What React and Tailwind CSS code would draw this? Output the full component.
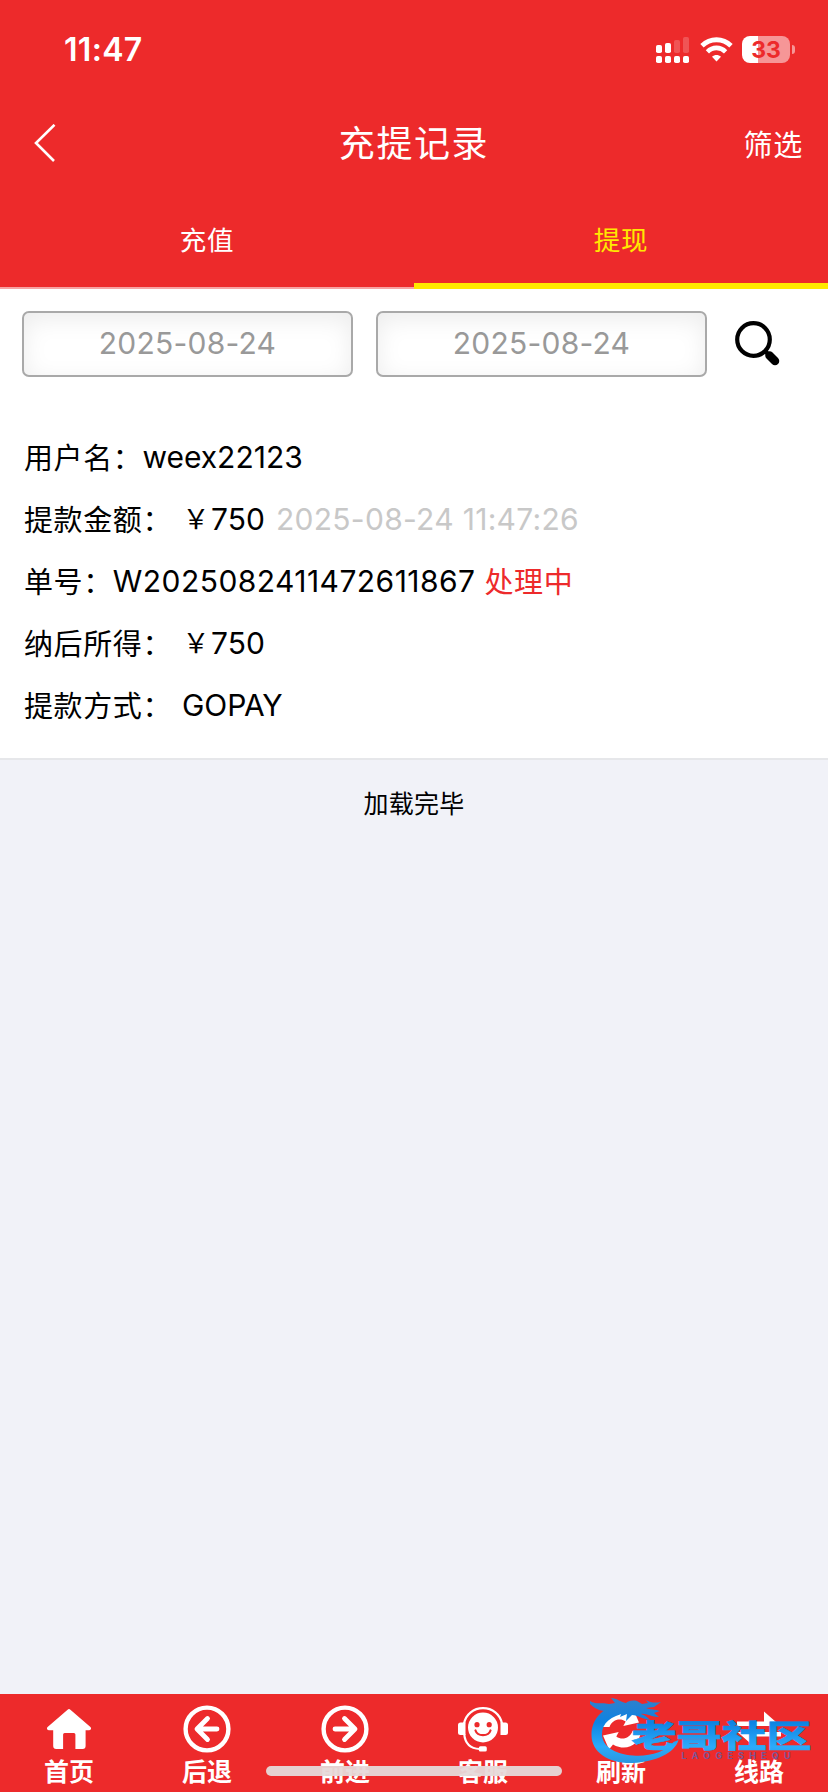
import clsx from 'clsx';

const tabs = [
    { label: '充值', active: false },
    { label: '提现', active: true },
];

function HomeIcon() {
    return (
        <svg width="44" height="40" viewBox="0 0 44 40" fill="#fff">
            <path d="M20.6 .8a2 2 0 0 1 2.8 0L43.4 18c1.2 1.2.6 3.2-1.2 3.2H38.6V37a3 3 0 0 1-3 3H28.4V25.6a1.5 1.5 0 0 0-1.5-1.5H17.6a1.5 1.5 0 0 0-1.5 1.5V40H9.2a3 3 0 0 1-3-3V21.2H1.8C0 21.2-.6 19.2.6 18Z" />
        </svg>
    );
}

function ArrowIcon({ flip }) {
    return (
        <svg width="48" height="48" viewBox="0 0 48 48" fill="none" stroke="#fff" strokeLinecap="round" strokeLinejoin="round" className={clsx(flip && '-scale-x-100')}>
            <circle cx="24" cy="24" r="21.4" strokeWidth="4.4" />
            <path d="M24.5 13.5 14 24l10.500 10.500M14.500 24H34" strokeWidth="4.8" />
        </svg>
    );
}

function ServiceIcon() {
    return (
        <svg width="50" height="45" viewBox="0 0 50 45" fill="none">
            <circle cx="25" cy="20.5" r="15" fill="#fff" />
            <path d="M6 16.5C8 7 15.5 1.2 25 1.2S42 7 44 16.5" stroke="#fff" strokeWidth="2.2" />
            <path d="M7.5 15.5V28h-5A2.5 2.5 0 0 1 0 25.5V18a2.5 2.5 0 0 1 2.5-2.5ZM42.5 15.5V28h5a2.5 2.5 0 0 0 2.5-2.5V18a2.5 2.5 0 0 0-2.5-2.5Z" fill="#fff" />
            <path d="M6.2 27c.8 9 6 14.6 15.5 15" stroke="#fff" strokeWidth="2.2" />
            <rect x="20.8" y="39.3" width="8" height="5.2" rx="1.6" fill="#fff" />
            <circle cx="19" cy="17.7" r="2.6" fill="#ed2a2b" />
            <circle cx="31.2" cy="17.7" r="2.6" fill="#ed2a2b" />
            <path d="M17.5 23.5c2 6.200 13 6.200 15 0" stroke="#ed2a2b" strokeWidth="2.2" strokeLinecap="round" />
        </svg>
    );
}

function RefreshIcon() {
    return (
        <svg width="44" height="44" viewBox="0 0 44 44" fill="#fff">
            <path d="M4 28.5 19.700 25l-2.400 4.500c5.500 4 13.700 2 16.200-5.500H42C41 37 28 45.500 14 37.500L10 42.500Z" />
            <path d="M4 28.5 19.700 25l-2.400 4.500c5.500 4 13.700 2 16.200-5.500H42C41 37 28 45.500 14 37.500L10 42.500Z" transform="rotate(180 22 22)" />
        </svg>
    );
}

function RouteIcon() {
    return (
        <svg width="44" height="40" viewBox="0 0 44 40" fill="#fff">
            <path d="M0 12.5h27v-10L43.5 17H0ZM44 27.5H17v10L.5 23H44Z" />
        </svg>
    );
}

const navItems = [
    { label: '首页', icon: <HomeIcon /> },
    { label: '后退', icon: <ArrowIcon /> },
    { label: '前进', icon: <ArrowIcon flip /> },
    { label: '客服', icon: <ServiceIcon /> },
    { label: '刷新', icon: <RefreshIcon /> },
    { label: '线路', icon: <RouteIcon /> },
];

function StatusBar() {
    return (
        <div className="h-[98px] flex items-start justify-between pl-[64px] pr-[33px] pt-[33px]">
            <span className="text-[32px] leading-[34px] font-semibold tracking-[0.3px]">11:47</span>
            <div className="flex items-center pt-[3px]">
                <svg width="33" height="27" viewBox="0 0 33 27" fill="#fff">
                    <rect x="0" y="9" width="6" height="8" rx="1.8" />
                    <rect x="9" y="7" width="6" height="10" rx="1.8" />
                    <rect x="18" y="4" width="6" height="13" rx="1.8" opacity=".2" />
                    <rect x="27" y="1" width="6" height="16" rx="1.8" opacity=".2" />
                    <rect x="0" y="20" width="6" height="7" rx="1.8" />
                    <rect x="9" y="20" width="6" height="7" rx="1.8" />
                    <rect x="18" y="20" width="6" height="7" rx="1.8" />
                    <rect x="27" y="20" width="6" height="7" rx="1.8" />
                </svg>
                <svg className="ml-[11px]" width="33" height="25" viewBox="0 0 33 25" fill="none" stroke="#fff">
                    <path d="M2 8.8C10.2.7 22.8.7 31 8.8" strokeWidth="4.8" />
                    <path d="M7.4 14.8c5.2-5.2 13-5.2 18.2 0" strokeWidth="4.6" />
                    <path d="M16.5 24.5 12 19.8c2.6-2.3 6.4-2.3 9 0Z" fill="#fff" stroke="none" />
                </svg>
                <div className="ml-[9px] w-[48px] h-[27px] rounded-[8px] bg-[linear-gradient(to_right,#fff_33.3%,#f69697_33.3%)] flex items-center justify-center pt-px text-[#ed2a2b] text-[23px] font-bold leading-none">
                    33
                </div>
                <span className="ml-[2px] w-[3px] h-[9px] rounded-r-full bg-[#f69697]" />
            </div>
        </div>
    );
}

function DateField({ value }) {
    return (
        <div className="w-[331px] h-[66px] rounded-[7px] border-2 border-[#a9a9a9] bg-white shadow-[inset_0_6px_24px_rgba(0,0,0,0.08)] flex items-center justify-center pb-px text-[30px] tracking-[0.25px] text-[#999]">
            {value}
        </div>
    );
}

function Row({ label, children }) {
    return (
        <div className="h-[62px] flex items-center whitespace-pre">
            <span className="tracking-[0.6px] pt-px">{label}</span>
            {children}
        </div>
    );
}

function Amount({ value }) {
    return (
        <>
            <span className="ml-[9px] w-[30px] text-center text-[27px]">￥</span>
            <span className="text-[30px] pb-[2px]">{value}</span>
        </>
    );
}

function Watermark() {
    return (
        <svg className="absolute left-[588px] top-[1692px]" width="226" height="76" viewBox="0 0 226 76">
            <defs>
                <linearGradient id="wm" x1="0" y1="0" x2="0" y2="76" gradientUnits="userSpaceOnUse">
                    <stop offset="0" stopColor="#3a7fc4" />
                    <stop offset=".4" stopColor="#0d83e3" />
                    <stop offset=".72" stopColor="#2cabfa" />
                    <stop offset="1" stopColor="#2b8fd8" />
                </linearGradient>
            </defs>
            <path d="M34 12C16 14 3.5 26 3.5 43 3.5 61 22 72 45 71c22-1 42-10 45.5-23l-5 2C78 60 60 65 45 63.5 26 62 14 54 14 42c0-11 9-18 24-21Z" fill="url(#wm)" />
            <path d="M2 9c7 4 12 1 19 3l6-1-4-5c6 0 9 4 15 5 2-2 6-3 11-2l5 3 6-1-2-3c5 3 9 3 15 2l-7 5-8 1c4 2 9 1 14 3l-6 2 5 4c-8 0-13-4-18-3 4 1 6 3 9 6-8-1-12-5-18-5l-6 6 1-7-7 3 2-5c-6 1-10 3-15 7l3-8c-7 0-13 0-20-7Z" fill="url(#wm)" />
            <text x="43.500" y="54.5" fontSize="31" fontWeight="900" textLength="180" lengthAdjust="spacingAndGlyphs" fill="url(#wm)" stroke="url(#wm)" strokeWidth=".6" className="font-['Noto_Sans_CJK_SC',sans-serif]">老哥社区</text>
            <text x="93.5" y="67" fontSize="9" fontWeight="700" textLength="109" fill="#7c5596" className="font-['Inter',sans-serif]">LAOGESHEQU</text>
        </svg>
    );
}

export default function App() {
    return (
        <div className="relative w-[828px] h-[1792px] overflow-hidden flex flex-col bg-[#f1f2f8] text-black font-['Inter','Noto_Sans_CJK_SC',sans-serif]">
            <header className="h-[289px] shrink-0 flex flex-col bg-[#ed2a2b] text-white">
                <StatusBar />
                <div className="h-[92px] flex items-center pl-[34px] pr-[25px]">
                    <div className="flex-1 pb-[3px]">
                        <svg width="22" height="38" viewBox="0 0 22 38" fill="none" stroke="#fff" strokeWidth="2.6">
                            <path d="M20.5 .8 2 19l18 18" />
                        </svg>
                    </div>
                    <h1 className="text-[36px] tracking-[1.6px] -ml-[9px]">充提记录</h1>
                    <span className="flex-1 text-right text-[29px] tracking-[0.8px] pt-[4px]">筛选</span>
                </div>
                <nav className="flex-1 flex">
                    {tabs.map(tab => (
                        <div
                            key={tab.label}
                            className={clsx(
                                'flex-1 flex justify-center text-[26.5px] leading-[40px] tracking-[0.8px] pt-[30px]',
                                tab.active ? 'text-[#ffe900] border-b-[6px] border-[#ffe900]' : 'border-b-2 border-[#f7a3a3]'
                            )}
                        >
                            {tab.label}
                        </div>
                    ))}
                </nav>
            </header>

            <main className="flex-1">
                <section className="h-[471px] bg-white border-b-2 border-[#e6e7ea]">
                    <div className="flex items-center pl-[22px] pt-[22px]">
                        <DateField value="2025-08-24" />
                        <div className="ml-[23px]">
                            <DateField value="2025-08-24" />
                        </div>
                        <svg className="ml-[28px]" width="45" height="46" viewBox="0 0 45 46" fill="none" stroke="#000">
                            <circle cx="18.5" cy="18.5" r="16.3" strokeWidth="4.2" />
                            <path d="m30 30 4 4" strokeWidth="4" />
                            <path d="m34.5 34.5 5.5 5.5" strokeWidth="8.5" strokeLinecap="round" />
                        </svg>
                    </div>

                    <div className="pt-[50px] pl-[24px] text-[29px]">
                        <Row label="用户名：">
                            <span className="text-[30px] pb-[2px]">weex22123</span>
                        </Row>
                        <Row label="提款金额：">
                            <Amount value="750" />
                            <span className="ml-[11px] text-[30px] tracking-[0.3px] pb-[2px] text-[#c8c8c8]">2025-08-24 11:47:26</span>
                        </Row>
                        <Row label="单号：">
                            <span className="text-[30px] tracking-[0.45px] pb-[2px]">W2025082411472611867</span>
                            <span className="ml-[9px] tracking-[0.6px] pt-px text-[#ed2a2b]">处理中</span>
                        </Row>
                        <Row label="纳后所得：">
                            <Amount value="750" />
                        </Row>
                        <Row label="提款方式：">
                            <span className="ml-[10px] text-[30px] tracking-[-0.1px] pb-[2px]">GOPAY</span>
                        </Row>
                    </div>
                </section>
                <p className="pt-[25px] text-center text-[25px] leading-[38px] tracking-[0.2px]">加载完毕</p>
            </main>

            <footer className="h-[98px] shrink-0 grid grid-cols-6 bg-[#ed2a2b] text-white">
                {navItems.map(item => (
                    <div key={item.label} className="flex flex-col items-center pt-[11px]">
                        <div className="h-[48px] flex items-center">{item.icon}</div>
                        <span className="pt-[5px] text-[25px] leading-[28px] font-bold">{item.label}</span>
                    </div>
                ))}
            </footer>

            <Watermark />
            <div className="absolute left-[266px] top-[1766px] w-[296px] h-[10px] rounded-full bg-[#e6d9d9]/95" />
        </div>
    );
}
